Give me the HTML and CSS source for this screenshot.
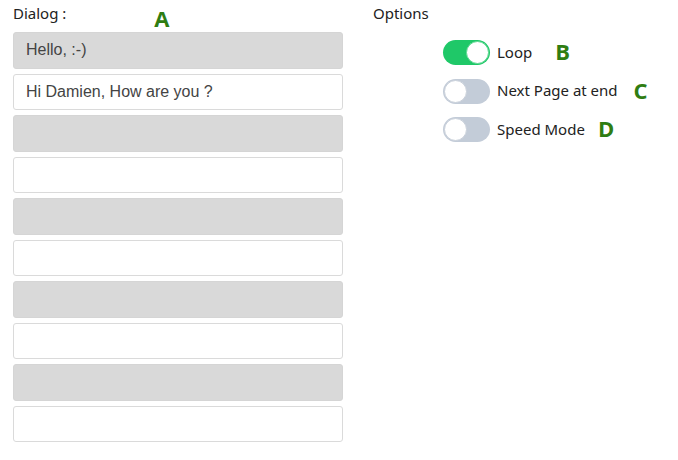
FILE: index.html
```html
<!DOCTYPE html>
<html>
<head>
<meta charset="utf-8">
<link rel="stylesheet" href="styles.css">
</head>
<body>
<div class="page">
  <section class="dialog">
    <div class="head">
      <span class="title">Dialog :</span>
      <span class="tag tag-a">A</span>
    </div>
    <div class="lines">
      <div class="line filled">Hello, :-)</div>
      <div class="line">Hi Damien, How are you ?</div>
      <div class="line filled"></div>
      <div class="line"></div>
      <div class="line filled"></div>
      <div class="line"></div>
      <div class="line filled"></div>
      <div class="line"></div>
      <div class="line filled"></div>
      <div class="line"></div>
    </div>
  </section>
  <section class="options">
    <div class="title">Options</div>
    <ul class="toggles">
      <li class="row">
        <span class="switch on"><span class="knob"></span></span>
        <span class="label">Loop</span>
        <span class="tag tag-b">B</span>
      </li>
      <li class="row">
        <span class="switch"><span class="knob"></span></span>
        <span class="label">Next Page at end</span>
        <span class="tag tag-c">C</span>
      </li>
      <li class="row">
        <span class="switch"><span class="knob"></span></span>
        <span class="label">Speed Mode</span>
        <span class="tag tag-d">D</span>
      </li>
    </ul>
  </section>
</div>
</body>
</html>
```
FILE: styles.css
```css
html, body {
  margin: 0;
  padding: 0;
  background: #fff;
}
.page {
  display: flex;
  padding: 0 0 0 13px;
  font-family: "Noto Sans", "Open Sans", sans-serif;
  color: #222;
}
.dialog {
  width: 330px;
}
.head {
  display: flex;
  align-items: center;
  height: 32px;
}
.title {
  font-size: 15px;
  line-height: 20px;
  color: #222;
}
.head .title {
  margin-top: -7px;
}
.tag {
  font-family: "Open Sans", "Noto Sans", sans-serif;
  font-weight: 700;
  color: #2f7d12;
  font-size: 22px;
  line-height: 24px;
}
.tag-a { margin-left: 88px; margin-top: 4px; }
.lines {
  display: flex;
  flex-direction: column;
  gap: 5px;
}
.line {
  box-sizing: border-box;
  height: 36.5px;
  border: 1px solid #dadada;
  border-radius: 3px;
  background: #fff;
  padding: 0 12px;
  display: flex;
  align-items: center;
  font-family: "Liberation Sans", Arial, sans-serif;
  font-size: 16px;
  color: #444;
}
.line.filled {
  background: #d9d9d9;
  border-color: #d5d5d5;
}
.options {
  margin-left: 30px;
  display: flex;
  flex-direction: column;
}
.options .title {
  height: 28px;
  margin-top: 3px;
  line-height: 20px;
}
.toggles {
  list-style: none;
  margin: 9px 0 0 70px;
  padding: 0;
  display: flex;
  flex-direction: column;
  gap: 13.5px;
}
.row {
  display: flex;
  align-items: center;
  height: 25px;
}
.switch {
  box-sizing: border-box;
  width: 47px;
  height: 25px;
  border-radius: 13px;
  background: #c3ccd8;
  display: flex;
  align-items: center;
  padding: 1px;
  flex: none;
}
.switch .knob {
  box-sizing: border-box;
  width: 23px;
  height: 23px;
  border-radius: 50%;
  background: #fff;
  border: 1px solid #c9d0da;
}
.switch.on {
  background: #1fc868;
  justify-content: flex-end;
}
.switch.on .knob {
  border-color: #5fd892;
}
.label {
  margin-left: 7px;
  font-size: 15px;
  line-height: 20px;
  margin-top: -2px;
  color: #222;
}
.row .tag { margin-top: -3px; }
.tag-b { margin-left: 23px; }
.tag-c { margin-left: 16px; }
.tag-d { margin-left: 13px; }
```
